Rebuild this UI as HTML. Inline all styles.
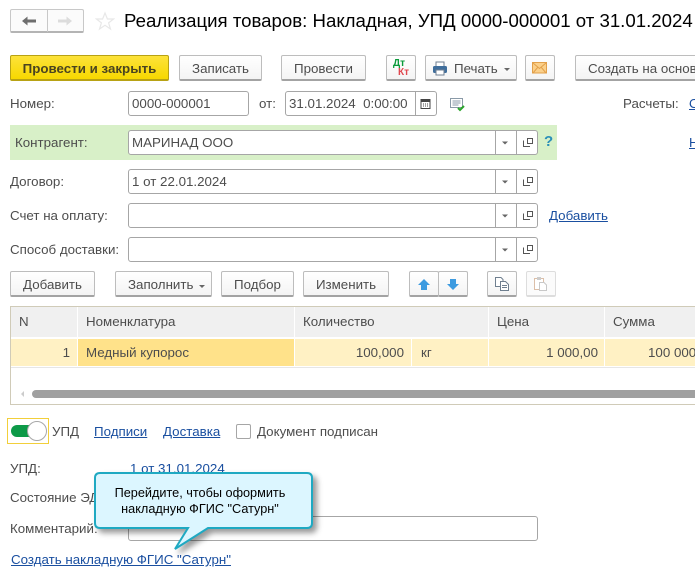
<!DOCTYPE html>
<html><head><meta charset="utf-8"><style>
html,body{margin:0;padding:0;background:#fff}
#p{position:relative;width:695px;height:576px;overflow:hidden;font:13.33px/16px "Liberation Sans",sans-serif;color:#4d4d4d;background:#fff}
#p div,#p a,#p svg{position:absolute;white-space:nowrap}
.b{box-sizing:border-box;height:26px;top:55px;border:1px solid #bdbdbd;border-bottom:2px solid #a3a3a3;border-radius:2px;background:linear-gradient(#fff,#f4f4f4);text-align:center;line-height:25px}
.i{box-sizing:border-box;height:25px;left:128px;width:410px;border:1px solid #a6a6a6;border-radius:3px;background:#fff;padding-left:3px;line-height:23px}
.d1,.d2{top:0;bottom:0;width:1px;background:#a6a6a6}
.l{left:10px}
a{color:#1a4fa0;text-decoration:underline}
.h{top:307px;height:30px;background:#f0f0f0;line-height:30px;padding-left:8px;box-sizing:border-box}
.c{top:339px;height:27px;background:#fff1c4;line-height:27px;box-sizing:border-box}
</style></head><body><div id="p">
<div style="left:10px;top:9px;width:74px;height:24px;box-sizing:border-box;border:1px solid #c8c8c8;border-bottom:2px solid #b4b4b4;border-radius:2px;background:#fbfbfb"></div>
<div style="left:47px;top:10px;width:1px;height:22px;background:#c8c8c8"></div>
<svg style="left:21px;top:16px" width="16" height="11"><path d="M1 5L6.500 .5V3.500H15V6.500H6.500V9.500Z" fill="#6e6e6e"/></svg>
<svg style="left:57px;top:16px" width="16" height="11"><path d="M15 5L9.500 .5V3.500H1V6.500H9.500V9.500Z" fill="#dcdcdc"/></svg>
<svg style="left:95px;top:11px" width="20" height="20"><path d="M10 2L12.4 8H18.6L13.6 11.9L15.5 18L10 14.3L4.5 18L6.4 11.9L1.4 8H7.6Z" fill="#fff" stroke="#e8e8e8" stroke-width="1.2"/></svg>
<div style="left:124px;top:10px;font-size:18.64px;line-height:22px;color:#000">Реализация товаров: Накладная, УПД 0000-000001 от 31.01.2024</div>

<div class="b" style="left:10px;width:159px;background:linear-gradient(#fde23a,#f7d800);border-color:#b8a214;font-weight:bold;color:#4a4420">Провести и закрыть</div>
<div class="b" style="left:179px;width:83px">Записать</div>
<div class="b" style="left:281px;width:85px">Провести</div>
<div class="b" style="left:386px;width:30px"></div>
<div style="left:393px;top:59px;font-size:10px;line-height:10px;color:#0a9a3a;font-weight:bold">Дт</div>
<div style="left:398px;top:68px;font-size:10px;line-height:10px;color:#e0484f;font-weight:bold">Кт</div>
<div class="b" style="left:425px;width:92px;text-align:left;padding-left:28px">Печать</div>
<svg style="left:432px;top:61px" width="16" height="15"><rect x="4" y="1" width="8" height="5" fill="#fff" stroke="#6f7f92"/><rect x="1" y="5" width="14" height="7" rx="1.5" fill="#3f6e9c"/><rect x="4" y="9" width="8" height="5" fill="#fff" stroke="#6f7f92"/></svg>
<svg style="left:504px;top:68px" width="6" height="4"><path d="M0 0H6L3 3Z" fill="#666"/></svg>
<div class="b" style="left:525px;width:30px"></div>
<svg style="left:532px;top:62px" width="16" height="12"><rect x=".5" y=".5" width="14" height="10.5" fill="#fbd08a" stroke="#e2a04a"/><path d="M1 1L7.5 6.5L14 1M1 11L6 5M14 11L9 5" fill="none" stroke="#e2a04a"/></svg>
<div class="b" style="left:575px;width:140px;text-align:left;padding-left:12px">Создать на основании</div>

<div class="l" style="top:96px">Номер:</div>
<div class="i" style="top:91px;width:121px">0000-000001</div>
<div style="left:259px;top:96px">от:</div>
<div class="i" style="top:91px;left:285px;width:152px">31.01.2024&nbsp; 0:00:00<div class="d1" style="left:129px"></div></div>
<svg style="left:420px;top:98px" width="11" height="11"><rect x="1" y="1.5" width="9" height="9" fill="#fff" stroke="#444"/><rect x="1" y="1" width="9" height="3" fill="#444"/><path d="M3 6h1M5 6h1M7 6h1M3 8h1M5 8h1M7 8h1" stroke="#444"/></svg>
<svg style="left:449px;top:97px" width="17" height="15"><rect x="1.5" y="1.5" width="12" height="9" fill="#fff" stroke="#8a9aa8"/><path d="M3.5 4h8M3.5 6h8M3.5 8h6" stroke="#8a9aa8"/><path d="M9 11L11 13L15 9" fill="none" stroke="#2aa52a" stroke-width="2"/></svg>
<div style="left:623px;top:96px">Расчеты:</div>
<a style="left:689px;top:96px">О</a>

<div style="left:10px;top:125px;width:547px;height:35px;background:#d8f0c8"></div>
<div style="left:15px;top:135px">Контрагент:</div>
<div class="i" style="top:130px">МАРИНАД ООО<div class="d1" style="left:366px"></div><div class="d2" style="left:387px"></div></div>
<div style="left:544px;top:134px;color:#2a8fb8;font-size:15px;font-weight:bold">?</div>
<a style="left:689px;top:135px">Н</a>

<div class="l" style="top:174px">Договор:</div>
<div class="i" style="top:169px">1 от 22.01.2024<div class="d1" style="left:366px"></div><div class="d2" style="left:387px"></div></div>
<div class="l" style="top:208px">Счет на оплату:</div>
<div class="i" style="top:203px"><div class="d1" style="left:366px"></div><div class="d2" style="left:387px"></div></div>
<a style="left:549px;top:208px">Добавить</a>
<div class="l" style="top:242px">Способ доставки:</div>
<div class="i" style="top:237px"><div class="d1" style="left:366px"></div><div class="d2" style="left:387px"></div></div>

<svg style="left:495px;top:130px" width="43" height="132" fill="none" stroke="#555">
<g><path d="M7 11.5H13L10 14.5Z" fill="#666" stroke="none"/><path d="M28.5 10.500V16.500H35M32.500 8.500H37.500V13.500H32.500Z"/></g>
<g transform="translate(0,39)"><path d="M7 11.5H13L10 14.5Z" fill="#666" stroke="none"/><path d="M28.5 10.500V16.500H35M32.500 8.500H37.500V13.500H32.500Z"/></g>
<g transform="translate(0,73)"><path d="M7 11.5H13L10 14.5Z" fill="#666" stroke="none"/><path d="M28.5 10.500V16.500H35M32.500 8.500H37.500V13.500H32.500Z"/></g>
<g transform="translate(0,107)"><path d="M7 11.5H13L10 14.5Z" fill="#666" stroke="none"/><path d="M28.5 10.500V16.500H35M32.500 8.500H37.500V13.500H32.500Z"/></g>
</svg>

<div class="b" style="top:271px;left:10px;width:85px">Добавить</div>
<div class="b" style="top:271px;left:115px;width:97px;text-align:left;padding-left:12px">Заполнить</div>
<svg style="left:199px;top:285px" width="6" height="3"><path d="M0 0H6L3 3Z" fill="#666"/></svg>
<div class="b" style="top:271px;left:221px;width:73px">Подбор</div>
<div class="b" style="top:271px;left:303px;width:86px">Изменить</div>
<div class="b" style="top:271px;left:409px;width:30px"></div>
<div class="b" style="top:271px;left:438px;width:30px"></div>
<svg style="left:418px;top:279px" width="12" height="12"><path d="M6 0L12 6H9V11H3V6H0Z" fill="#3d9be0"/></svg>
<svg style="left:447px;top:279px" width="12" height="12"><path d="M6 11L12 5H9V0H3V5H0Z" fill="#3d9be0"/></svg>
<div class="b" style="top:271px;left:487px;width:30px"></div>
<svg style="left:494px;top:276px" width="16" height="16"><path d="M1.500 1.500H7L9 3.500V10.500H1.500Z" fill="#fff" stroke="#6f7f8f"/><path d="M6.500 5.500H11.500L14.500 8.500V14.500H6.500Z" fill="#fff" stroke="#6f7f8f"/><path d="M8 9.500H13M8 11.500H13" stroke="#6f7f8f"/></svg>
<div class="b" style="top:271px;left:526px;width:30px;border-color:#ddd;background:#fbfbfb"></div>
<svg style="left:533px;top:276px" width="16" height="16"><rect x="1.500" y="2.500" width="9" height="11" fill="#fff" stroke="#dcbfa8"/><rect x="4" y="1" width="4" height="3" fill="#ccc"/><path d="M6.500 6.500H11L13.500 9V14.500H6.500Z" fill="#fff" stroke="#c8c8c8"/></svg>

<div style="left:10px;top:306px;width:700px;height:99px;box-sizing:border-box;border:1px solid #d0cbb8"></div>
<div class="h" style="left:11px;width:66px">N</div>
<div class="h" style="left:78px;width:216px">Номенклатура</div>
<div class="h" style="left:295px;width:193px">Количество</div>
<div class="h" style="left:489px;width:115px">Цена</div>
<div class="h" style="left:605px;width:90px">Сумма</div>
<div style="left:11px;top:367px;width:684px;height:1px;background:#e6e6e6"></div>
<div class="c" style="left:11px;width:66px;text-align:right;padding-right:7px">1</div>
<div class="c" style="left:78px;width:216px;background:#ffe28a;padding-left:8px">Медный купорос</div>
<div class="c" style="left:295px;width:116px;text-align:right;padding-right:7px">100,000</div>
<div class="c" style="left:412px;width:76px;padding-left:9px">кг</div>
<div class="c" style="left:489px;width:115px;text-align:right;padding-right:6px">1 000,00</div>
<div class="c" style="left:605px;width:90px;padding-left:43px">100 000</div>
<svg style="left:20px;top:390px" width="5" height="8"><path d="M4 1V7L1 4Z" fill="#ccc"/></svg>
<div style="left:32px;top:390px;width:680px;height:8px;background:#a0a0a0;border-radius:4px"></div>

<div style="left:7px;top:418px;width:42px;height:26px;box-sizing:border-box;border:1px solid #f2cf3a"></div>
<div style="left:11px;top:425px;width:24px;height:12px;background:#0d9a48;border-radius:6px"></div>
<div style="left:27px;top:421px;width:20px;height:20px;box-sizing:border-box;background:#fff;border:1px solid #a8a8a8;border-radius:50%"></div>
<div style="left:52px;top:424px">УПД</div>
<a style="left:94px;top:424px">Подписи</a>
<a style="left:163px;top:424px">Доставка</a>
<div style="left:236px;top:424px;width:15px;height:15px;box-sizing:border-box;border:1px solid #a6a6a6;border-radius:2px"></div>
<div style="left:257px;top:424px">Документ подписан</div>

<div class="l" style="top:461px">УПД:</div>
<div style="left:130px;top:461px;color:#1a4fa0">1 от 31.01.2024</div>
<div class="l" style="top:490px">Состояние ЭДО:</div>
<div class="l" style="top:521px">Комментарий:</div>
<div class="i" style="top:516px"></div>
<a style="left:11px;top:552px">Создать накладную ФГИС "Сатурн"</a>

<svg style="left:90px;top:468px;filter:drop-shadow(4px 4px 3px rgba(0,0,0,.4));overflow:visible" width="235" height="90"><path d="M10 5H217Q222 5 222 10V55Q222 60 217 60H118L85 81L98 60H10Q5 60 5 55V10Q5 5 10 5Z" fill="#dcf6ff" stroke="#1fa9c2" stroke-width="2"/></svg>
<div style="left:94px;top:485px;width:212px;text-align:center;color:#000;font-size:12.7px;line-height:16px;white-space:normal">Перейдите, чтобы оформить<br>накладную ФГИС "Сатурн"</div>
</div></body></html>
